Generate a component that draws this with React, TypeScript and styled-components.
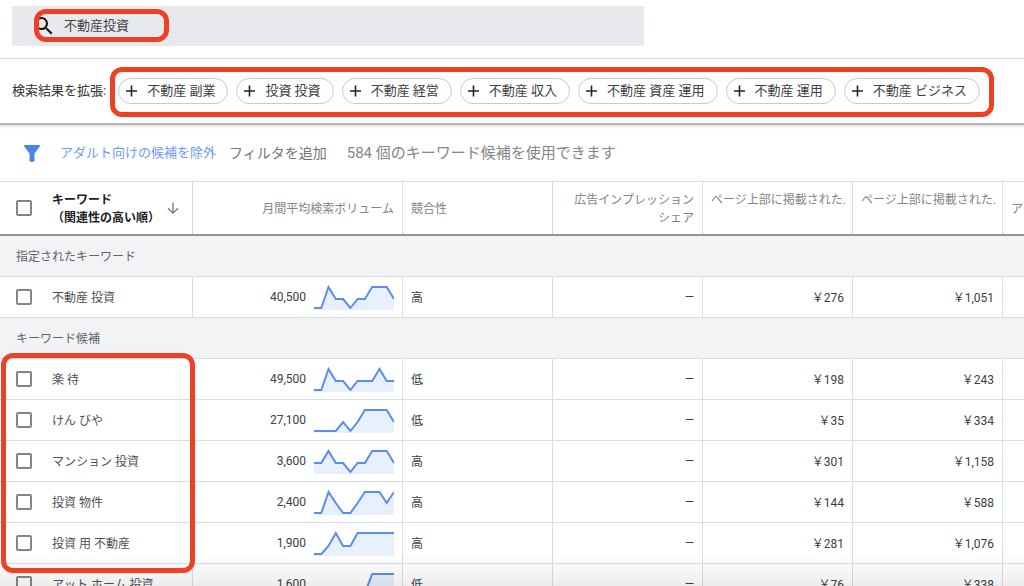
import React from "react";
import styled, { createGlobalStyle } from "styled-components";

const GlobalStyle = createGlobalStyle`
  *, *::before, *::after { box-sizing: border-box; }
  body {
    margin: 0;
    background: #fff;
    color: #3c4043;
    font-family: Roboto, "Noto Sans CJK JP", sans-serif;
    font-size: 12px;
    line-height: 18px;
  }
  button, input { font: inherit; color: inherit; }
`;

const red = "#ee4025";
const line = "#dadce0";

const Page = styled.main`
  position: relative;
  height: 100vh;
  overflow: hidden;
`;

const BottomFade = styled.div`
  position: absolute;
  left: 0;
  right: 0;
  bottom: 0;
  height: 32px;
  background: linear-gradient(rgba(0, 0, 0, 0), rgba(0, 0, 0, 0.07));
  pointer-events: none;
`;

const SearchSection = styled.section`
  padding: 6px 12px 12px;
  border-bottom: 1px solid #e0e0e0;
`;

const SearchBar = styled.form`
  position: relative;
  display: flex;
  align-items: center;
  gap: 8px;
  max-width: 632px;
  height: 40px;
  padding: 0 20px;
  background: #e8e9ec;

  &::after {
    content: "";
    position: absolute;
    top: 3px;
    left: 22px;
    width: 135px;
    height: 33px;
    border: 5px solid ${red};
    border-radius: 12px;
    pointer-events: none;
  }
`;

const SearchInput = styled.input`
  flex: 1;
  min-width: 0;
  height: 24px;
  padding: 0 0 4px;
  border: 0;
  outline: 0;
  background: transparent;
  color: #444;
  font-size: 13px;
`;

const ExpandSection = styled.section`
  display: flex;
  align-items: center;
  gap: 12px;
  height: 66px;
  padding-left: 12px;
  border-bottom: 2px solid #b3b3b3;
  box-shadow: 0 1px 3px rgba(0, 0, 0, 0.16);
`;

const ExpandLabel = styled.h2`
  margin: 0;
  color: #333;
  font-size: 13px;
  font-weight: 400;
  white-space: nowrap;
`;

const ChipList = styled.div`
  position: relative;
  display: flex;
  gap: 8px;

  &::after {
    content: "";
    position: absolute;
    inset: -11px -14px -13px -8px;
    border: 5px solid ${red};
    border-radius: 12px;
    pointer-events: none;
  }
`;

const Chip = styled.button`
  display: flex;
  align-items: center;
  gap: 8px;
  height: 26px;
  padding: 0 12px 0 6px;
  border: 1px solid #c9cacf;
  border-radius: 13px;
  background: #fff;
  color: #3c4043;
  font-size: 13px;
  white-space: nowrap;
`;

const FilterBar = styled.section`
  display: flex;
  align-items: center;
  height: 56px;
  padding-left: 24px;
  white-space: nowrap;
`;

const FilterLink = styled.a`
  margin: 0 13px 0 20px;
  color: #6b9af2;
  font-size: 13px;
  text-decoration: none;
`;

const AddFilter = styled.button`
  margin-right: 20px;
  padding: 0;
  border: 0;
  background: none;
  color: #757575;
  font-size: 14px;
`;

const Availability = styled.span`
  color: #858585;
  font-size: 15px;
`;

const Table = styled.table`
  width: 100%;
  table-layout: fixed;
  border-collapse: separate;
  border-spacing: 0;
  border-top: 1px solid ${line};
`;

const Col = styled.col<{ $width?: number }>`
  width: ${(p) => (p.$width ? `${p.$width}px` : "auto")};
`;

const HeadCell = styled.th<{ $align?: "left" | "right" }>`
  height: 54px;
  padding: 2px 9px 0 8px;
  border-bottom: 2px solid #8f9696;
  box-shadow: inset -1px 0 ${line};
  color: #80868b;
  font-weight: 400;
  text-align: ${(p) => p.$align ?? "left"};
  white-space: nowrap;

  &:last-child { box-shadow: none; }
`;

const KeywordHeadCell = styled(HeadCell)`
  padding: 0 9px 0 16px;
  color: #202124;
  font-weight: 700;
`;

const TwoLines = styled.div`
  height: 36px;
`;

const SectionCell = styled.th`
  height: 41px;
  padding: 2px 16px 0;
  border-bottom: 1px solid ${line};
  background: #f1f3f4;
  color: #5f6368;
  font-weight: 400;
  text-align: left;
`;

const Cell = styled.td`
  height: 41px;
  padding: 0 8px;
  border-right: 1px solid ${line};
  border-bottom: 1px solid ${line};
  white-space: nowrap;

  &:last-child { border-right: 0; }
`;

const TextCell = styled(Cell)`
  padding-top: 2px;
`;

const PriceCell = styled(TextCell)`
  text-align: right;
`;

const EmptyShareCell = styled(Cell)`
  text-align: right;
`;

const KeywordCell = styled(Cell)`
  position: relative;
  padding-left: 16px;
  color: #4d5053;
`;

const GroupOutline = styled.div`
  position: absolute;
  z-index: 1;
  top: -6px;
  left: 1px;
  right: -3px;
  height: 220px;
  border: 5px solid ${red};
  border-radius: 12px;
  pointer-events: none;
`;

const CheckLabel = styled.label`
  display: flex;
  align-items: center;
  gap: 20px;
`;

const CheckText = styled.span`
  padding-top: 2px;
`;

const Checkbox = styled.input`
  appearance: none;
  flex: none;
  width: 16px;
  height: 16px;
  margin: 0;
  border: 2px solid #858585;
  border-radius: 2px;
  background: #fff;
`;

const KeywordHead = styled.div`
  display: flex;
  align-items: center;
  justify-content: space-between;
  padding-right: 4px;
`;

const Volume = styled.div`
  display: flex;
  align-items: center;
  justify-content: flex-end;
  gap: 8px;
`;

const SearchIcon = () => (
  <svg width="24" height="24" viewBox="0 0 24 24" fill="#111" aria-hidden="true">
    <path d="M15.5 14h-.79l-.28-.27A6.47 6.47 0 0 0 16 9.5 6.5 6.5 0 1 0 9.5 16c1.61 0 3.09-.59 4.23-1.57l.27.28v.79l5 4.99L20.49 19l-4.99-5zm-6 0C7.01 14 5 11.99 5 9.5S7.01 5 9.5 5 14 7.01 14 9.5 11.99 14 9.5 14z" />
  </svg>
);

const PlusIcon = () => (
  <svg width="14" height="14" viewBox="0 0 14 14" stroke="#222" strokeWidth="1.6" aria-hidden="true">
    <path d="M6.5 1.5v11M1 7h11" />
  </svg>
);

const FunnelIcon = () => (
  <svg width="16" height="17" viewBox="0 0 16 17" fill="#4a85ee" aria-hidden="true">
    <path d="M.9 0h14.2c.8 0 1.2.8.7 1.4L10.5 8.6v7.2c0 .5-.4.9-.9.9H6.4c-.5 0-.9-.4-.9-.9V8.6L.2 1.4C-.3.8.1 0 .9 0z" />
  </svg>
);

const ArrowIcon = () => (
  <svg width="14" height="14" viewBox="0 0 14 14" fill="none" stroke="#757575" strokeWidth="1.3" aria-hidden="true">
    <path d="M7 1.5v10.5M2 7.2l5 5 5-5" />
  </svg>
);

const Sparkline = ({ values }: { values: number[] }) => {
  const points = values.map((y, i) => `${((i * 80) / 11).toFixed(1)},${y}`).join(" ");
  return (
    <svg width="80" height="26" viewBox="0 -2 80 26" aria-hidden="true">
      <polygon points={`0,24 ${points} 80,24`} fill="#e8effd" />
      <polyline points={points} fill="none" stroke="#5a8df0" strokeWidth="2" />
    </svg>
  );
};

type Keyword = {
  name: string;
  volume: string;
  trend: number[];
  competition: string;
  low: string;
  high: string;
};

const given: Keyword[] = [
  { name: "不動産 投資", volume: "40,500", trend: [22, 22, 1, 13, 13, 22, 13, 13, 1, 1, 1, 13], competition: "高", low: "276", high: "1,051" },
];

const ideas: Keyword[] = [
  { name: "楽 待", volume: "49,500", trend: [22, 22, 1, 13, 13, 22, 13, 13, 13, 1, 13, 13], competition: "低", low: "198", high: "243" },
  { name: "けん びや", volume: "27,100", trend: [22, 22, 22, 22, 13, 22, 13, 1, 1, 1, 1, 13], competition: "低", low: "35", high: "334" },
  { name: "マンション 投資", volume: "3,600", trend: [13, 13, 1, 13, 13, 22, 13, 13, 1, 1, 1, 13], competition: "高", low: "301", high: "1,158" },
  { name: "投資 物件", volume: "2,400", trend: [22, 22, 1, 12, 22, 22, 12, 1, 1, 1, 12, 1], competition: "高", low: "144", high: "588" },
  { name: "投資 用 不動産", volume: "1,900", trend: [22, 22, 14, 1, 14, 14, 1, 1, 1, 1, 1, 1], competition: "高", low: "281", high: "1,076" },
  { name: "アット ホーム 投資", volume: "1,600", trend: [22, 22, 22, 22, 22, 22, 22, 20, 1, 1, 1, 1], competition: "低", low: "76", high: "338" },
];

const chips = ["不動産 副業", "投資 投資", "不動産 経営", "不動産 収入", "不動産 資産 運用", "不動産 運用", "不動産 ビジネス"];

const KeywordRow = ({ item, outlined }: { item: Keyword; outlined?: boolean }) => (
  <tr>
    <KeywordCell>
      <CheckLabel>
        <Checkbox type="checkbox" />
        <CheckText>{item.name}</CheckText>
      </CheckLabel>
      {outlined && <GroupOutline />}
    </KeywordCell>
    <Cell>
      <Volume>
        {item.volume}
        <Sparkline values={item.trend} />
      </Volume>
    </Cell>
    <TextCell>{item.competition}</TextCell>
    <EmptyShareCell>—</EmptyShareCell>
    <PriceCell>￥{item.low}</PriceCell>
    <PriceCell>￥{item.high}</PriceCell>
    <Cell />
  </tr>
);

export default function App() {
  return (
    <Page>
      <GlobalStyle />
      <SearchSection>
        <SearchBar onSubmit={(e) => e.preventDefault()}>
          <SearchIcon />
          <SearchInput type="text" aria-label="キーワード" defaultValue="不動産投資" />
        </SearchBar>
      </SearchSection>

      <ExpandSection>
        <ExpandLabel>検索結果を拡張:</ExpandLabel>
        <ChipList>
          {chips.map((chip) => (
            <Chip key={chip} type="button">
              <PlusIcon />
              {chip}
            </Chip>
          ))}
        </ChipList>
      </ExpandSection>

      <FilterBar>
        <FunnelIcon />
        <FilterLink href="#filter">アダルト向けの候補を除外</FilterLink>
        <AddFilter type="button">フィルタを追加</AddFilter>
        <Availability>584 個のキーワード候補を使用できます</Availability>
      </FilterBar>

      <Table>
        <colgroup>
          <Col $width={193} />
          <Col $width={210} />
          <Col $width={150} />
          <Col $width={150} />
          <Col $width={150} />
          <Col $width={150} />
          <Col />
        </colgroup>
        <thead>
          <tr>
            <KeywordHeadCell>
              <KeywordHead>
                <CheckLabel>
                  <Checkbox type="checkbox" />
                  <CheckText>
                    キーワード
                    <br />
                    （関連性の高い順）
                  </CheckText>
                </CheckLabel>
                <ArrowIcon />
              </KeywordHead>
            </KeywordHeadCell>
            <HeadCell $align="right">月間平均検索ボリューム</HeadCell>
            <HeadCell>競合性</HeadCell>
            <HeadCell $align="right">
              広告インプレッション
              <br />
              シェア
            </HeadCell>
            <HeadCell>
              <TwoLines>ページ上部に掲載された.</TwoLines>
            </HeadCell>
            <HeadCell>
              <TwoLines>ページ上部に掲載された.</TwoLines>
            </HeadCell>
            <HeadCell>ア</HeadCell>
          </tr>
        </thead>
        <tbody>
          <tr>
            <SectionCell colSpan={7}>指定されたキーワード</SectionCell>
          </tr>
          {given.map((item) => (
            <KeywordRow key={item.name} item={item} />
          ))}
        </tbody>
        <tbody>
          <tr>
            <SectionCell colSpan={7}>キーワード候補</SectionCell>
          </tr>
          {ideas.map((item, i) => (
            <KeywordRow key={item.name} item={item} outlined={i === 0} />
          ))}
        </tbody>
      </Table>
      <BottomFade />
    </Page>
  );
}
